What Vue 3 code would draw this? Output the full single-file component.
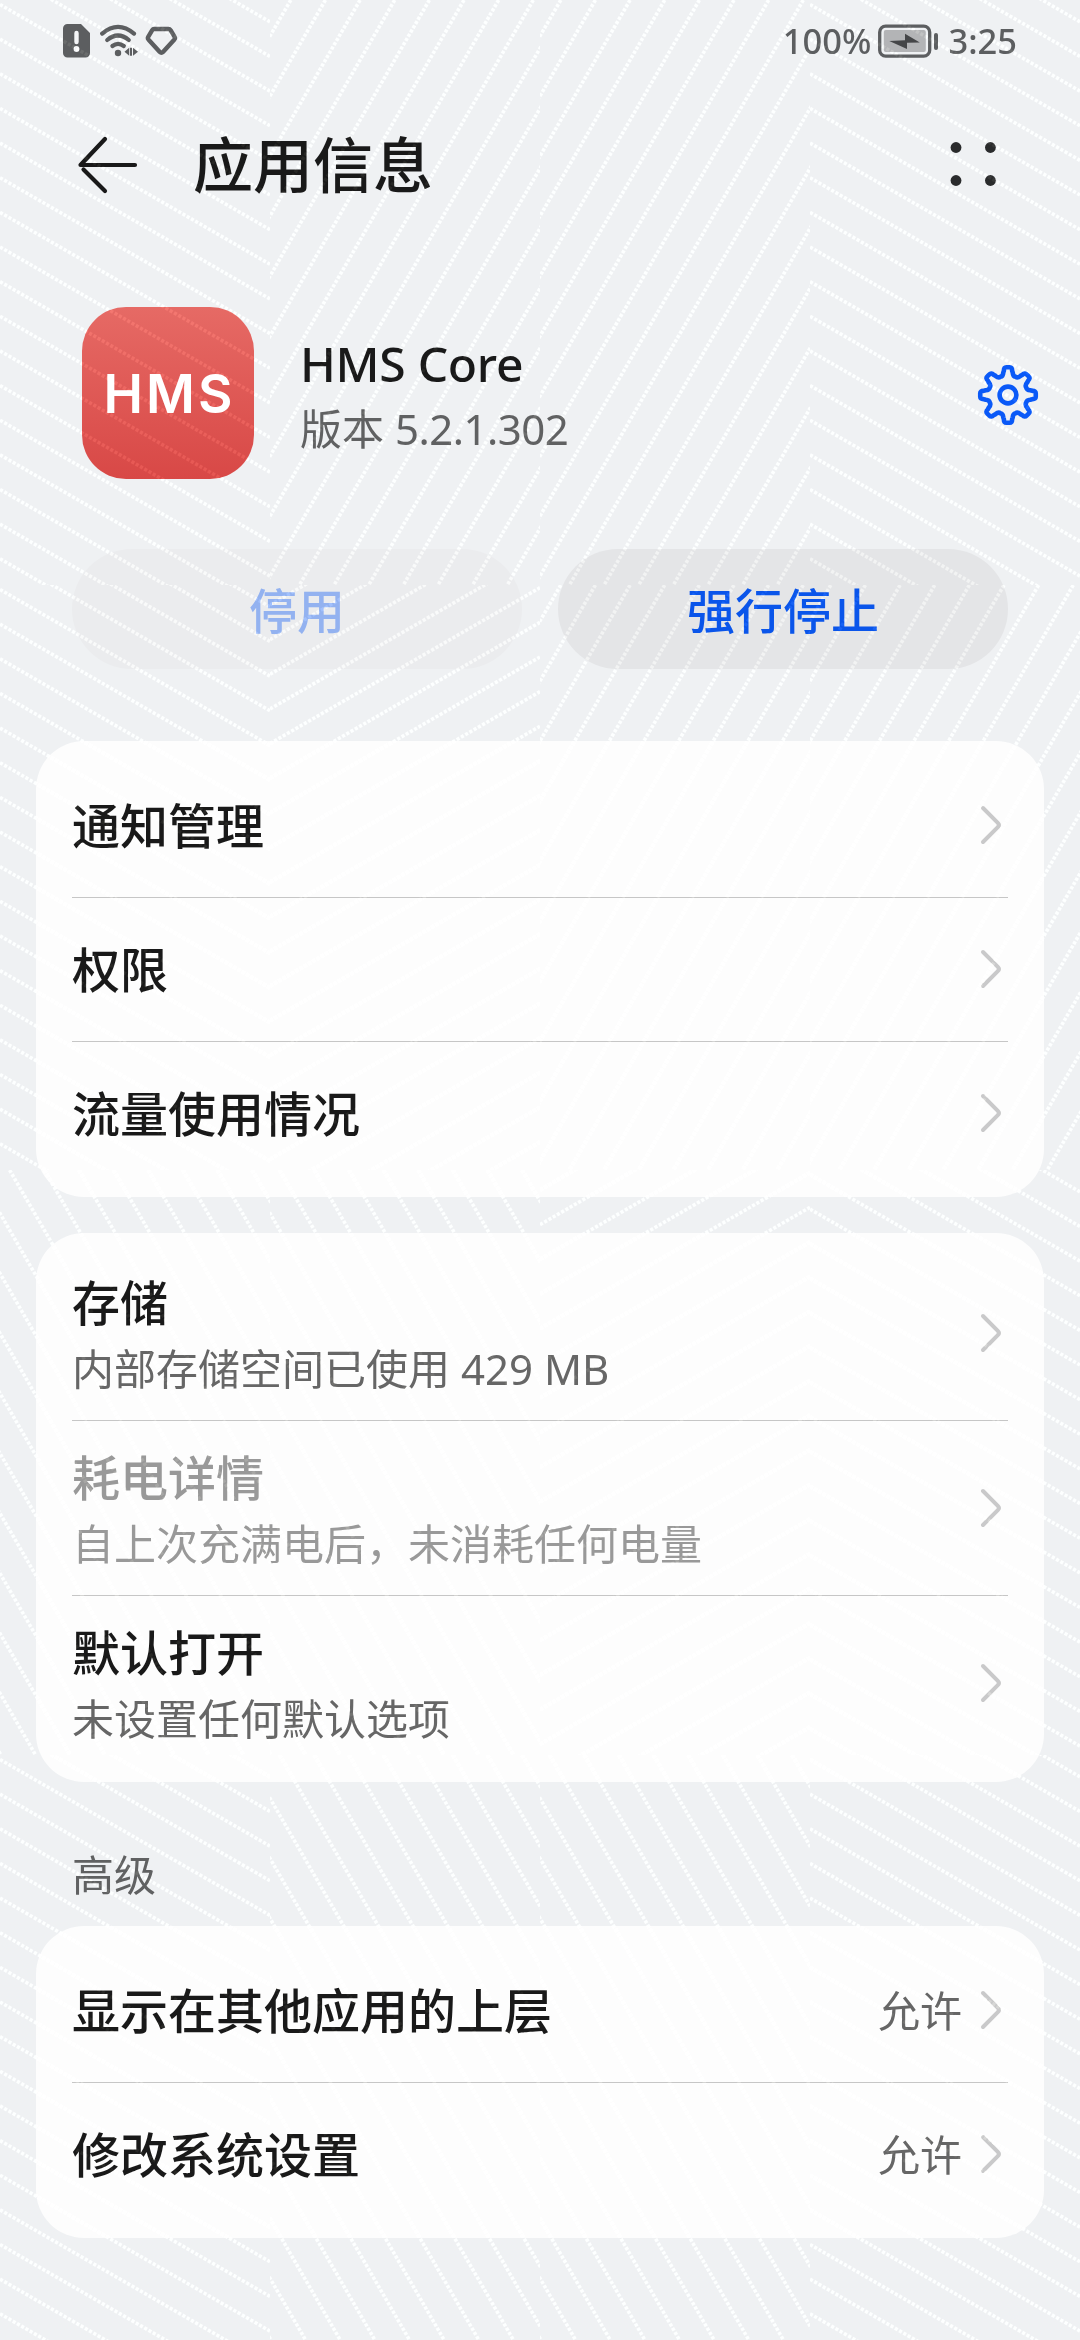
<script setup>
const groups = [
  {
    rows: [{ title: '通知管理' }, { title: '权限' }, { title: '流量使用情况' }],
  },
  {
    rows: [
      { title: '存储', sub: '内部存储空间已使用', latin: ' 429 MB' },
      { title: '耗电详情', sub: '自上次充满电后，未消耗任何电量', disabled: true },
      { title: '默认打开', sub: '未设置任何默认选项' },
    ],
  },
  {
    heading: '高级',
    rows: [
      { title: '显示在其他应用的上层', value: '允许' },
      { title: '修改系统设置', value: '允许' },
    ],
  },
]

// Dotted background weave: a 4 x 4 grid of tiles, each hatched in one direction.
// a: shallow falling, b: shallow rising, c: steep falling, d: steep rising
const TILE_W = 270
const TILE_H = 585
const STEP = 34.641
const TAN = 0.57735
const layout = ['adda', 'abdd', 'ccba', 'acca']

function hatch(kind) {
  let d = ''
  for (let i = -14; i < 36; i++) {
    if (kind === 'a') {
      const y = 4.5 + i * STEP
      d += `M0 ${y.toFixed(2)}L${TILE_W} ${(y + TILE_W * TAN).toFixed(2)}`
    } else if (kind === 'b') {
      const y = 20 + i * STEP
      d += `M0 ${y.toFixed(2)}L${TILE_W} ${(y - TILE_W * TAN).toFixed(2)}`
    } else if (kind === 'c') {
      const x = 9.6 + i * STEP
      d += `M${x.toFixed(2)} 0L${(x + TILE_H * TAN).toFixed(2)} ${TILE_H}`
    } else {
      const x = 20.8 + i * STEP
      d += `M${x.toFixed(2)} 0L${(x - TILE_H * TAN).toFixed(2)} ${TILE_H}`
    }
  }
  return d
}

const kinds = ['a', 'b', 'c', 'd'].map((k) => ({ k, d: hatch(k) }))
const tiles = layout.flatMap((line, r) =>
  [...line].map((k, c) => ({ k, x: c * TILE_W, y: r * TILE_H })),
)

// Eight-toothed gear outline, rounded by its stroke joins and curves.
function gear(cx, cy, outer, inner) {
  const pt = (r, a) => {
    const t = (a * Math.PI) / 180
    return `${(cx + r * Math.sin(t)).toFixed(2)} ${(cy - r * Math.cos(t)).toFixed(2)}`
  }
  let d = ''
  for (let i = 0; i < 8; i++) {
    const a = i * 45
    d += `${i ? 'L' : 'M'}${pt(outer - 3, a - 9.5)}`
    d += `Q${pt(outer + 0.4, a - 8.5)} ${pt(outer, a - 3)}L${pt(outer, a + 3)}`
    d += `Q${pt(outer + 0.4, a + 8.5)} ${pt(outer - 3, a + 9.5)}`
    d += `L${pt(inner + 2.8, a + 12)}Q${pt(inner - 0.6, a + 15)} ${pt(inner - 0.3, a + 22.5)}`
    d += `Q${pt(inner - 0.6, a + 30)} ${pt(inner + 2.8, a + 33)}`
  }
  return d + 'Z'
}
const gearPath = gear(31, 31, 27.8, 20)
</script>

<template>
  <div class="screen">
    <header class="status">
      <div class="status-left">
        <svg class="sim" width="27" height="34" viewBox="0 0 27 34">
          <path fill="#5c5e60" d="M4.5 0H18l9 9v20a4.5 4.5 0 0 1-4.5 4.500h-18A4.500 4.500 0 0 1 0 29V4.500A4.500 4.500 0 0 1 4.500 0Z" />
          <path stroke="#f4f5f7" stroke-width="4.400" stroke-linecap="round" d="M13.500 9v9" />
          <circle cx="13.500" cy="25" r="2.900" fill="#f4f5f7" />
        </svg>
        <svg class="wifi" width="38" height="34" viewBox="0 0 38 34" fill="none" stroke="#5c5e60" stroke-width="4.200" stroke-linecap="round">
          <path d="M2.200 9.600Q18 -3.800 34 9.600" />
          <path d="M7.200 16Q18 7 28.800 16" />
          <path d="M12.400 22Q18 17.600 23.800 22" />
          <circle cx="18" cy="29" r="3.200" fill="#5c5e60" stroke="none" />
          <path fill="#5c5e60" stroke="none" d="M24.500 27.800l4.700-4v8ZM30 23.800h2v8h-2ZM33 23.800l5 4-5 4Z" />
        </svg>
        <svg class="gem" width="33" height="30" viewBox="0 0 33 30">
          <path fill="none" stroke="#5c5e60" stroke-width="4.400" stroke-linejoin="round" d="M9.200 3h14.200q1.400 0 2.200 1.200l4 6.600q.8 1.400-.2 2.600L18 26q-1.600 1.600-3.200 0L3.400 13.400q-1-1.200-.2-2.600l4-6.600Q7.900 3 9.200 3Z" />
        </svg>
      </div>
      <div class="status-right">
        <span class="pct">100%</span>
        <svg class="battery" width="61" height="34" viewBox="0 0 61 34">
          <rect x="1.700" y="2.200" width="50" height="30" rx="6" fill="none" stroke="#5c5e60" stroke-width="3.300" />
          <rect x="5.800" y="6" width="42" height="22" rx="2" fill="#b3b4b6" />
          <path fill="#454648" d="M11.300 17l15.700-.8V9.800L41.800 18.500l-12.800.2V25Z" />
          <rect x="56" y="9" width="4" height="17" rx="2" fill="#5c5e60" />
        </svg>
        <span class="clock">3:25</span>
      </div>
    </header>

    <nav class="bar">
      <svg width="62" height="58" viewBox="0 0 62 58" fill="none" stroke="#191919" stroke-width="4.200" stroke-linecap="round" stroke-linejoin="round">
        <path d="M59 29H4.500L29 3M29 55L7.500 33.500" />
      </svg>
      <h1>应用信息</h1>
      <svg class="more" width="48" height="48" viewBox="0 0 48 48" fill="#2a2b2c">
        <circle cx="7" cy="7.500" r="5.400" />
        <circle cx="41.400" cy="7.500" r="5.400" />
        <circle cx="7" cy="40.500" r="5.400" />
        <circle cx="41.400" cy="40.500" r="5.400" />
      </svg>
    </nav>

    <section class="app">
      <div class="logo"><span>HMS</span></div>
      <div class="meta">
        <div class="name">HMS Core</div>
        <div class="version">版本 <span>5.2.1.302</span></div>
      </div>
      <svg class="gear" width="62" height="62" viewBox="0 0 62 62" fill="none" stroke="#0a59f7" stroke-width="4.600" stroke-linejoin="round">
        <path :d="gearPath" />
        <circle cx="31" cy="31" r="8.400" />
      </svg>
    </section>

    <div class="actions">
      <button class="off">停用</button>
      <button>强行停止</button>
    </div>

    <template v-for="(group, g) in groups" :key="g">
      <h2 v-if="group.heading">{{ group.heading }}</h2>
      <ul class="card">
        <li v-for="row in group.rows" :key="row.title" :class="{ tall: row.sub, disabled: row.disabled }">
          <div class="label">
            <div class="title">{{ row.title }}</div>
            <div v-if="row.sub" class="sub">{{ row.sub }}<span v-if="row.latin" class="latin">{{ row.latin }}</span></div>
          </div>
          <span v-if="row.value" class="value">{{ row.value }}</span>
          <svg class="chevron" width="24" height="40" viewBox="0 0 24 40" fill="none" stroke="#c9c9ca" stroke-width="4" stroke-linecap="round">
            <path d="M3 3L17.800 17.800Q20 20 17.800 22.200L3 37" />
          </svg>
        </li>
      </ul>
    </template>

    <svg class="weave" width="1080" height="2340" viewBox="0 0 1080 2340" aria-hidden="true">
      <defs>
        <symbol v-for="p in kinds" :id="'hatch-' + p.k" :key="p.k" width="270" height="585" viewBox="0 0 270 585">
          <path :d="p.d" fill="none" stroke="#0e0e0c" stroke-width="3.600" stroke-dasharray="3.200 1.700" />
        </symbol>
      </defs>
      <use v-for="(t, i) in tiles" :key="i" :href="'#hatch-' + t.k" :x="t.x" :y="t.y" width="270" height="585" />
    </svg>
  </div>
</template>

<style>
html,
body {
  background: #eff1f3;
}
</style>

<style scoped>
.screen {
  position: relative;
  box-sizing: border-box;
  width: 1080px;
  height: 2340px;
  overflow: hidden;
  background: #eff1f3;
  color: #191919;
  font-family: "Noto Sans", "Noto Sans CJK SC", sans-serif;
}
.weave {
  position: absolute;
  inset: 0;
  pointer-events: none;
  mix-blend-mode: plus-lighter;
}
.status {
  display: flex;
  justify-content: space-between;
  align-items: center;
  height: 82px;
  padding: 0 63px;
  color: #5c5e60;
  font-size: 34.5px;
  font-weight: 500;
}
.status span {
  padding-bottom: 2px;
}
.status-left,
.status-right {
  display: flex;
  align-items: center;
}
.wifi {
  margin-left: 10px;
}
.gem {
  margin-left: 7px;
}
.battery {
  margin: 0 9px 0 7px;
}
.bar {
  display: flex;
  align-items: center;
  height: 166px;
  padding: 0 83px 0 76px;
}
h1 {
  flex: 1;
  margin: 0 0 0 55px;
  font-size: 60px;
  font-weight: 500;
  line-height: 80px;
}
.more {
  margin-top: -2px;
}
.app {
  display: flex;
  align-items: center;
  height: 172px;
  margin-top: 59px;
  padding: 0 41px 0 82px;
}
.logo {
  display: flex;
  align-items: center;
  justify-content: center;
  width: 172px;
  height: 172px;
  border-radius: 44px;
  background: linear-gradient(#e66a65, #d84846);
  color: #fff;
  font-family: Inter, sans-serif;
  font-size: 53px;
  font-weight: 600;
  letter-spacing: 3px;
}
.logo span {
  margin: 2px -3px 0 0;
}
.meta {
  flex: 1;
  margin-left: 46px;
  padding-top: 5px;
}
.name {
  font-size: 48px;
  font-weight: 500;
  letter-spacing: -0.3px;
  line-height: 66px;
}
.version {
  color: #606162;
  font-size: 42px;
  line-height: 64px;
}
.version span {
  letter-spacing: -0.5px;
}
.gear {
  margin-top: 4px;
}
.actions {
  display: flex;
  gap: 36px;
  margin: 70px 72px 72px;
}
button {
  flex: 1;
  height: 120px;
  padding: 0 0 3px;
  border: 0;
  border-radius: 60px;
  background: #e4e5e7;
  color: #0a55ea;
  font: 500 48px "Noto Sans CJK SC", sans-serif;
}
button.off {
  background: #ebecee;
  color: #93b2f0;
}
h2 {
  margin: 53px 72px 11px;
  color: #606162;
  font-size: 42px;
  font-weight: 400;
  line-height: 80px;
}
.card {
  margin: 0 36px;
  padding: 12px 36px;
  border-radius: 48px;
  background: #fdfdfd;
  list-style: none;
}
.card + .card {
  margin-top: 36px;
}
li {
  position: relative;
  display: flex;
  align-items: center;
  height: 144px;
}
li.tall {
  height: 175px;
}
li + li::before {
  content: "";
  position: absolute;
  inset: 0 0 auto;
  height: 1px;
  background: #c6c6c6;
}
.label {
  flex: 1;
  padding-top: 2px;
}
.tall .label {
  padding-top: 6px;
}
.title {
  font-size: 48px;
  font-weight: 500;
  line-height: 64px;
}
.sub {
  margin-top: 2px;
  color: #666;
  font-size: 42px;
  line-height: 64px;
}
.latin {
  white-space: pre;
}
.disabled .title {
  color: #999;
}
.disabled .sub {
  color: #999;
}
.value {
  margin-right: 18px;
  padding-bottom: 3px;
  color: #666;
  font-size: 42px;
}
.chevron {
  margin-right: 4px;
}
</style>
